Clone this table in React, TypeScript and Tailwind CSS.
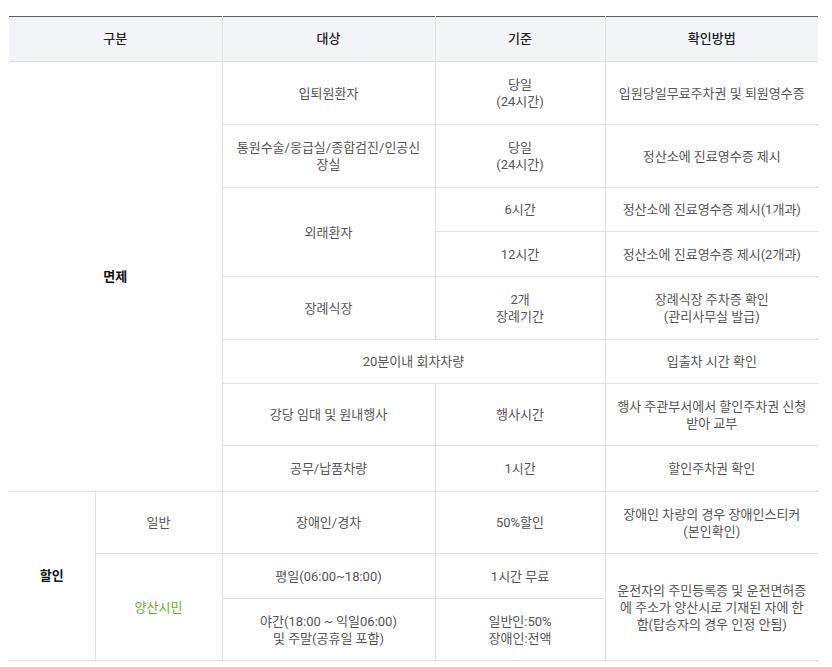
import React from "react";

const base = "border border-[#e1e1e1] text-center align-middle px-2 text-[13px] leading-[17px]";
const td = base + " text-[#555]";

export default function App() {
  return (
    <div className="w-[832px] h-[667px] bg-white pt-[16px] pl-[9px]" style={{ fontFamily: 'Roboto, "Noto Sans CJK KR", sans-serif' }}>
      <table className="table-fixed border-collapse w-[809px] border-t-[1px] border-t-[#5a5e60]">
        <colgroup>
          <col className="w-[86px]" />
          <col className="w-[127px]" />
          <col className="w-[213px]" />
          <col className="w-[170px]" />
          <col className="w-[213px]" />
        </colgroup>
        <thead>
          <tr className="h-[45px] bg-[#f3f4f8]">
            <th colSpan={2} className="border-b border-r border-[#e1e1e1] border-t border-t-[#5a5e60] text-[13px] font-medium text-[#222]">구분</th>
            <th className="border border-[#e1e1e1] border-t-[#5a5e60] text-[13px] font-medium text-[#222]">대상</th>
            <th className="border border-[#e1e1e1] border-t-[#5a5e60] text-[13px] font-medium text-[#222]">기준</th>
            <th className="border-b border-l border-[#e1e1e1] border-t border-t-[#5a5e60] text-[13px] font-medium text-[#222]">확인방법</th>
          </tr>
        </thead>
        <tbody>
          <tr className="h-[63px]">
            <td colSpan={2} rowSpan={9} className="border-b border-r border-[#e1e1e1] text-center text-[13px] font-bold text-[#111]">면제</td>
            <td className={td}>입퇴원환자</td>
            <td className={td}>당일<br />(24시간)</td>
            <td className={td + " border-r-0"}>입원당일무료주차권 및 퇴원영수증</td>
          </tr>
          <tr className="h-[63px]">
            <td className={td}>통원수술/응급실/종합검진/인공신<br />장실</td>
            <td className={td}>당일<br />(24시간)</td>
            <td className={td + " border-r-0"}>정산소에 진료영수증 제시</td>
          </tr>
          <tr className="h-[44px]">
            <td rowSpan={2} className={td}>외래환자</td>
            <td className={td}>6시간</td>
            <td className={td + " border-r-0"}>정산소에 진료영수증 제시(1개과)</td>
          </tr>
          <tr className="h-[45px]">
            <td className={td}>12시간</td>
            <td className={td + " border-r-0"}>정산소에 진료영수증 제시(2개과)</td>
          </tr>
          <tr className="h-[63px]">
            <td className={td}>장례식장</td>
            <td className={td}>2개<br />장례기간</td>
            <td className={td + " border-r-0"}>장례식장 주차증 확인<br />(관리사무실 발급)</td>
          </tr>
          <tr className="h-[44px]">
            <td colSpan={2} className={td}>20분이내 회차차량</td>
            <td className={td + " border-r-0"}>입출차 시간 확인</td>
          </tr>
          <tr className="h-[62px]">
            <td className={td}>강당 임대 및 원내행사</td>
            <td className={td}>행사시간</td>
            <td className={td + " border-r-0"}>행사 주관부서에서 할인주차권 신청<br />받아 교부</td>
          </tr>
          <tr className="h-[46px]">
            <td className={td}>공무/납품차량</td>
            <td className={td}>1시간</td>
            <td className={td + " border-r-0"}>할인주차권 확인</td>
          </tr>
          <tr className="h-0"></tr>
          <tr className="h-[62px]">
            <td rowSpan={3} className="border-b border-r border-[#e1e1e1] text-center text-[13px] font-bold text-[#111]">할인</td>
            <td className={td}>일반</td>
            <td className={td}>장애인/경차</td>
            <td className={td}>50%할인</td>
            <td className={td + " border-r-0"}>장애인 차량의 경우 장애인스티커<br />(본인확인)</td>
          </tr>
          <tr className="h-[45px]">
            <td rowSpan={2} className={base + " text-[#6aab2e]"}>양산시민</td>
            <td className={td}>평일(06:00~18:00)</td>
            <td className={td}>1시간 무료</td>
            <td rowSpan={2} className={td + " border-r-0"}>운전자의 주민등록증 및 운전면허증<br />에 주소가 양산시로 기재된 자에 한<br />함(탑승자의 경우 인정 안됨)</td>
          </tr>
          <tr className="h-[62px]">
            <td className={td}>야간(18:00 ~ 익일06:00)<br />및 주말(공휴일 포함)</td>
            <td className={td}>일반인:50%<br />장애인:전액</td>
          </tr>
        </tbody>
      </table>
    </div>
  );
}
